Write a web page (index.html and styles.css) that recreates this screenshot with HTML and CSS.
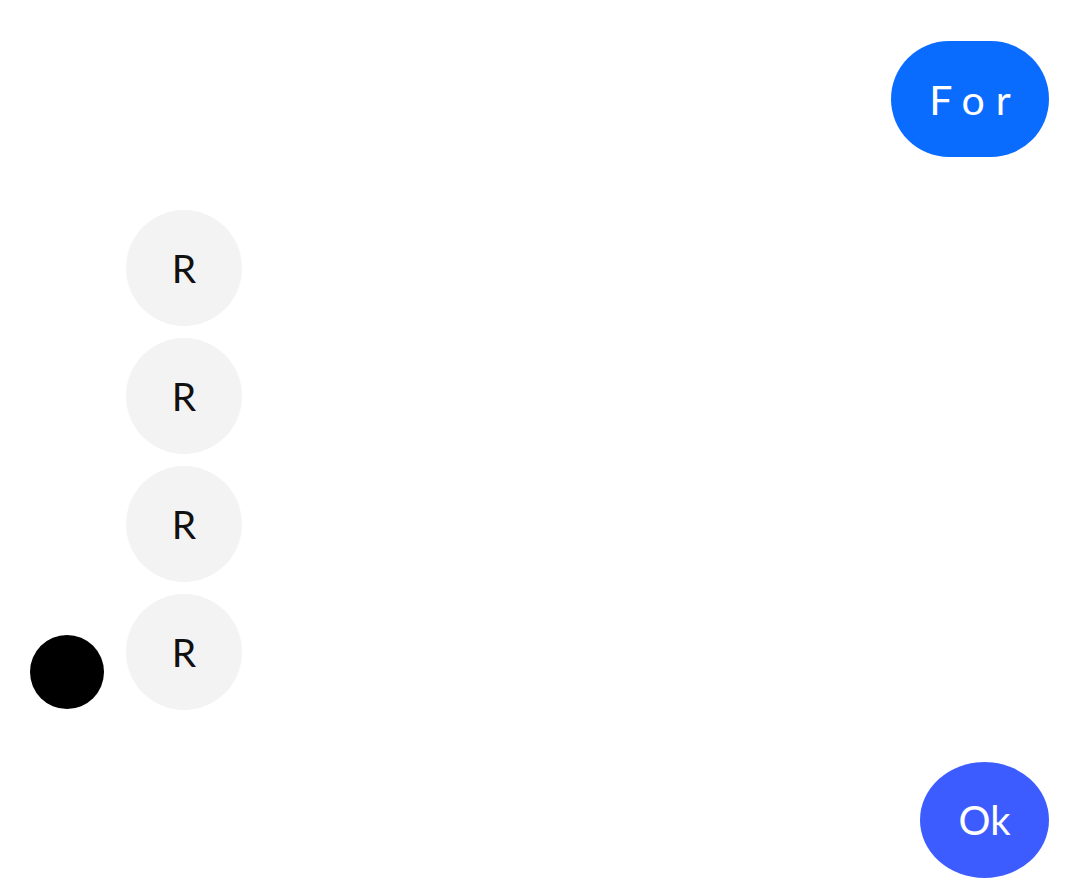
FILE: index.html
```html
<!DOCTYPE html>
<html>
<head>
<meta charset="utf-8">
<link rel="stylesheet" href="styles.css">
</head>
<body>
<div class="screen">
  <div class="top-row">
    <button class="pill">For</button>
  </div>
  <div class="list">
    <div class="row"><div class="side"></div><div class="bubble">R</div></div>
    <div class="row"><div class="side"></div><div class="bubble">R</div></div>
    <div class="row"><div class="side"></div><div class="bubble">R</div></div>
    <div class="row"><div class="side"><div class="dot"></div></div><div class="bubble">R</div></div>
  </div>
  <div class="bottom-row">
    <button class="ok">Ok</button>
  </div>
</div>
</body>
</html>
```
FILE: styles.css
```css
html, body {
  margin: 0;
  padding: 0;
  background: #ffffff;
}
.screen {
  width: 1080px;
  height: 888px;
  box-sizing: border-box;
  padding: 41px 31px 0 30px;
  display: flex;
  flex-direction: column;
  font-family: Lato, "Noto Sans", sans-serif;
}
.top-row {
  display: flex;
  justify-content: flex-end;
}
.pill {
  width: 158px;
  height: 116px;
  border: none;
  border-radius: 58px;
  background: #0a6cff;
  color: #ffffff;
  font-family: Lato, "Noto Sans", sans-serif;
  font-size: 41px;
  letter-spacing: 11px;
  padding: 0 0 0 11px;
  display: flex;
  align-items: center;
  justify-content: center;
}
.list {
  margin-top: 53px;
  display: flex;
  flex-direction: column;
  gap: 12px;
}
.row {
  display: flex;
  align-items: flex-end;
  gap: 22px;
}
.side {
  width: 74px;
  display: flex;
  align-items: flex-end;
}
.dot {
  width: 74px;
  height: 74px;
  border-radius: 50%;
  background: #000000;
  margin-bottom: 1px;
}
.bubble {
  width: 116px;
  height: 116px;
  border-radius: 50%;
  background: #f3f3f3;
  color: #111111;
  font-size: 39px;
  font-weight: 400;
  display: flex;
  align-items: center;
  justify-content: center;
}
.bottom-row {
  margin-top: 52px;
  display: flex;
  justify-content: flex-end;
}
.ok {
  width: 129px;
  height: 116px;
  border: none;
  border-radius: 50%;
  background: #3d5cff;
  color: #ffffff;
  font-family: Lato, "Noto Sans", sans-serif;
  font-size: 40px;
  padding: 0;
  display: flex;
  align-items: center;
  justify-content: center;
}
```
